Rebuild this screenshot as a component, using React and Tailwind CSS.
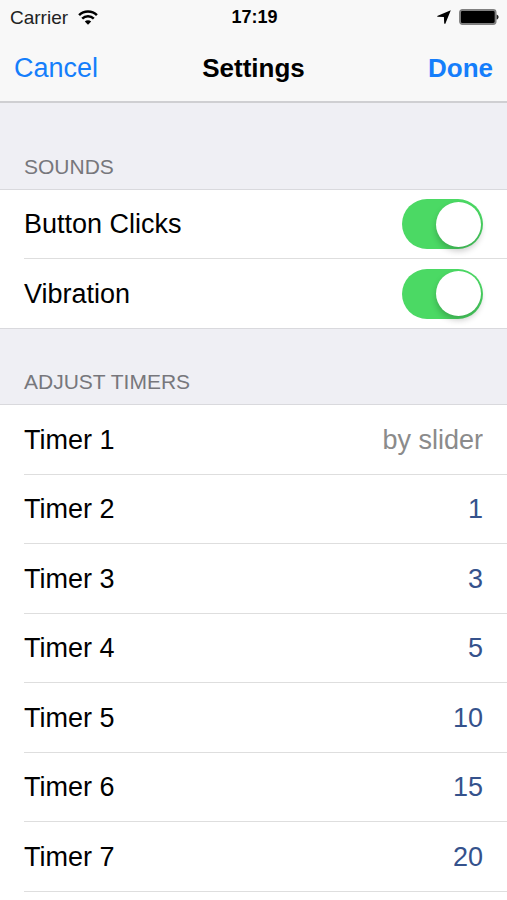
import { useState } from 'react';

const TIMERS = [
  { id: 1, value: 'by slider' },
  { id: 2, value: '1' },
  { id: 3, value: '3' },
  { id: 4, value: '5' },
  { id: 5, value: '10' },
  { id: 6, value: '15' },
  { id: 7, value: '20' },
];

function WifiIcon() {
  return (
    <svg viewBox="0 0 20 15" className="h-[15px] w-5" fill="none" aria-hidden="true">
      <path d="M1.1 5.1a12.6 12.6 0 0 1 17.8 0" stroke="#000" strokeWidth="2.5" />
      <path d="M4.2 8.7a8.2 8.2 0 0 1 11.6 0" stroke="#000" strokeWidth="2.5" />
      <path d="M10 14.8 6.8 11.6a4.6 4.6 0 0 1 6.4 0Z" fill="#000" />
    </svg>
  );
}

function LocationIcon() {
  return (
    <svg viewBox="0 0 14 14" className="h-[14px] w-[14px]" aria-hidden="true">
      <path d="M13.8.2 8.2 14 7.2 13.6 6.9 7.1.4 6.8.2 5.9Z" fill="#000" />
    </svg>
  );
}

function BatteryIcon() {
  return (
    <svg viewBox="0 0 40 16" className="h-4 w-10" aria-hidden="true">
      <rect x="1" y="1" width="35.6" height="14" rx="2.4" fill="#000" stroke="#808080" strokeWidth="1.9" />
      <path d="M37.6 5.4c1.3.4 2 1.4 2 2.6s-.7 2.2-2 2.6Z" fill="#222" />
    </svg>
  );
}

function StatusBar() {
  return (
    <div className="grid h-[34px] grid-cols-3 items-center pl-[10px] pr-2 text-[19px] leading-none">
      <div className="flex items-center gap-[10px] text-[#222]">
        <span>Carrier</span>
        <WifiIcon />
      </div>
      <span className="text-center text-[18px] font-bold">17:19</span>
      <div className="flex items-center justify-end gap-2">
        <LocationIcon />
        <BatteryIcon />
      </div>
    </div>
  );
}

function SectionHeader({ id, className, children }) {
  return (
    <h2
      id={id}
      className={`flex items-end border-b border-[#d9d9dd] bg-[#efeff4] px-6 pb-[10px] text-[21px] leading-6 text-[#77777c] ${className}`}
    >
      {children}
    </h2>
  );
}

function SwitchRow({ id, label, last }) {
  const [on, setOn] = useState(true);

  return (
    <div className={last ? 'border-b border-[#d9d9dd] pl-6' : 'pl-6'}>
      <div
        className={`flex h-[69px] items-center justify-between pr-6 ${
          last ? '' : 'border-b border-[#dedede]'
        }`}
      >
        <label htmlFor={id}>{label}</label>
        <input
          id={id}
          type="checkbox"
          role="switch"
          checked={on}
          onChange={(e) => setOn(e.target.checked)}
          className="flex h-[50px] w-[81px] appearance-none items-center rounded-full bg-[#e5e5ea] px-[2px] before:block before:h-[45px] before:w-[45px] before:rounded-full before:bg-white before:shadow-[0_4px_6px_rgba(0,0,0,0.22)] checked:justify-end checked:bg-[#4bd964]"
        />
      </div>
    </div>
  );
}

function TimerRow({ timer }) {
  const id = `timer-${timer.id}`;
  const color = timer.value === 'by slider' ? 'text-[#8b8b8b]' : 'text-[#35528c]';

  return (
    <li className="flex items-center justify-between border-b border-[#dedede] pr-6 odd:h-[70px] even:h-[69px]">
      <label htmlFor={id}>Timer {timer.id}</label>
      <input
        id={id}
        type="text"
        defaultValue={timer.value}
        className={`w-40 bg-transparent text-right outline-none ${color}`}
      />
    </li>
  );
}

export default function App() {
  return (
    <div className="min-h-screen bg-white font-['Liberation_Sans',Arial,sans-serif] text-[27px] leading-8 text-black">
      <header className="border-b-2 border-[#cfcfd2] bg-[#f8f8f8]">
        <StatusBar />
        <div className="grid h-[67px] grid-cols-3 items-center px-[14px]">
          <button type="button" className="justify-self-start text-[#157efb]">
            Cancel
          </button>
          <h1 className="text-center text-[26px] font-bold">Settings</h1>
          <button type="button" className="justify-self-end text-[26px] font-bold text-[#157efb]">
            Done
          </button>
        </div>
      </header>

      <main>
        <section aria-labelledby="sounds">
          <SectionHeader id="sounds" className="h-[87px]">
            SOUNDS
          </SectionHeader>
          <SwitchRow id="clicks" label="Button Clicks" />
          <SwitchRow id="vibration" label="Vibration" last />
        </section>

        <section aria-labelledby="timers">
          <SectionHeader id="timers" className="h-[76px]">
            ADJUST TIMERS
          </SectionHeader>
          <ul className="pl-6">
            {TIMERS.map((timer) => (
              <TimerRow key={timer.id} timer={timer} />
            ))}
          </ul>
        </section>
      </main>
    </div>
  );
}
